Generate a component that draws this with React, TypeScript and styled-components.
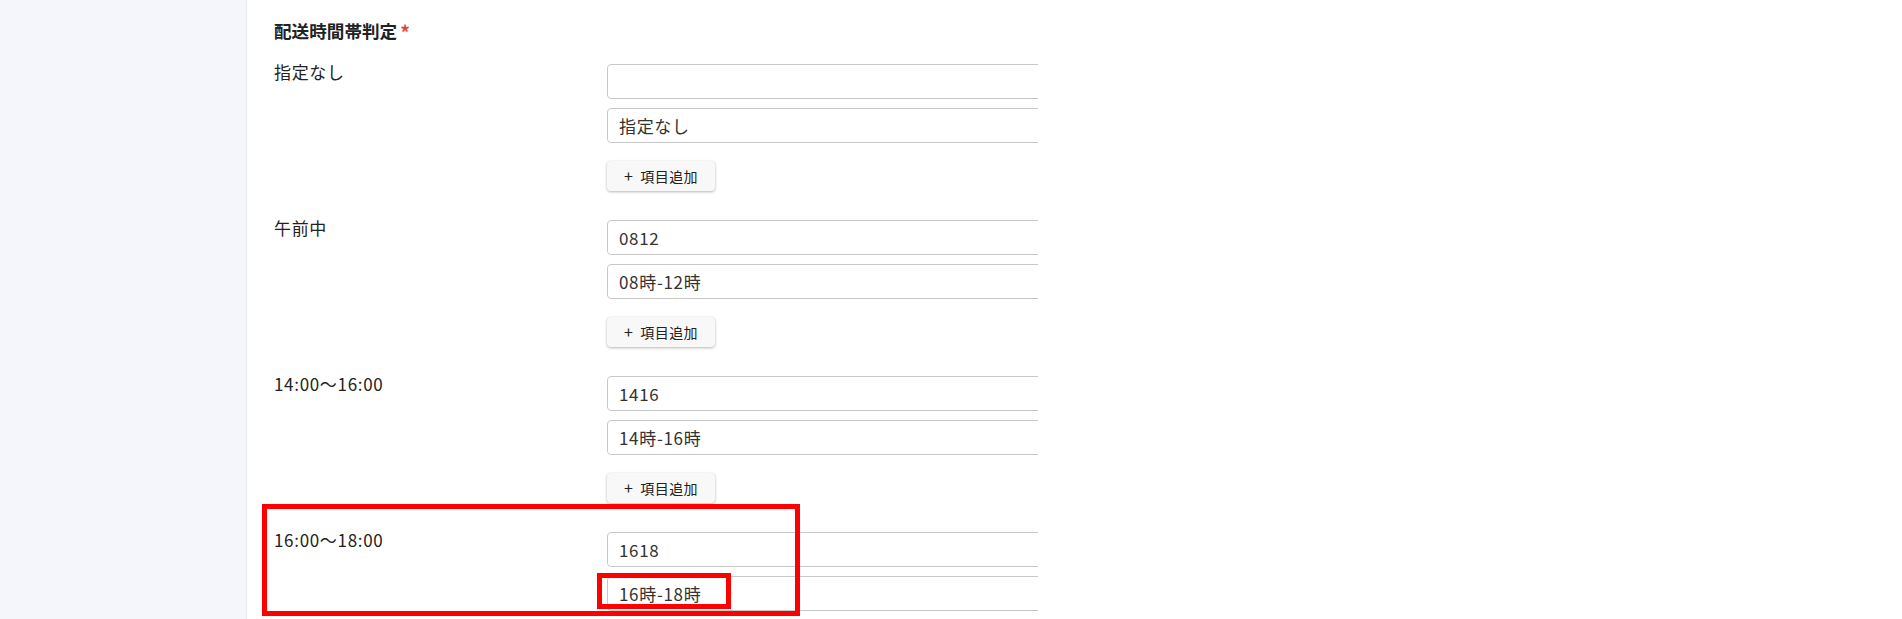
import React from "react";
import styled, { createGlobalStyle } from "styled-components";

const GlobalStyle = createGlobalStyle`
  html, body { margin: 0; padding: 0; background: #ffffff; }
  body {
    font-family: "Noto Sans CJK JP", "Noto Sans", sans-serif;
    color: #333333;
    overflow: hidden;
  }
  * { box-sizing: border-box; }
`;

const Layout = styled.div`
  display: flex;
  min-height: 100vh;
`;

const Sidebar = styled.aside`
  width: 247px;
  flex: 0 0 247px;
  background: #f5f6fb;
  border-right: 1px solid #e7e9ef;
`;

const Main = styled.main`
  flex: 1;
  padding: 18px 0 0 27px;
  background: #ffffff;
`;

const Title = styled.h2`
  margin: 0 0 20px;
  font-size: 17.6px;
  line-height: 1.5;
  font-weight: 700;
  color: #222222;
  display: flex;
  align-items: flex-start;
  gap: 3px;
`;

const Required = styled.span`
  color: #e8443a;
  font-size: 19px;
  font-weight: 700;
  line-height: 1;
  margin-top: 4px;
`;

const Groups = styled.div`
  display: flex;
  flex-direction: column;
  gap: 29px;
`;

const Group = styled.div`
  position: relative;
  display: grid;
  grid-template-columns: 333px 431px;
  align-items: start;
`;

const Label = styled.div`
  font-size: 17px;
  line-height: 1.2;
  letter-spacing: 0.04em;
  color: #222222;
  margin-top: -2px;
`;

const Fields = styled.div`
  position: relative;
  display: flex;
  flex-direction: column;
  align-items: flex-start;
  gap: 9px;
`;

const Clip = styled.div`
  width: 431px;
  overflow: hidden;
`;

const Input = styled.input`
  display: block;
  width: 520px;
  height: 35px;
  padding: 0 11px;
  border: 1px solid #c8c8c8;
  border-radius: 4px;
  font-family: inherit;
  font-size: 17px;
  letter-spacing: 0.04em;
  color: #333333;
  background: #ffffff;
  outline: none;
`;

const AddButton = styled.button`
  margin-top: 9px;
  width: 108px;
  height: 30px;
  border: none;
  border-radius: 4px;
  background: #f8f8f8;
  box-shadow: 0 1px 3px rgba(0, 0, 0, 0.28), 0 0 1px rgba(0, 0, 0, 0.08);
  font-family: inherit;
  font-size: 14px;
  letter-spacing: 0.03em;
  color: #222222;
  display: flex;
  align-items: center;
  justify-content: center;
  gap: 7px;
  cursor: pointer;
  padding: 0;
`;

const Plus = styled.span`
  font-size: 16px;
  font-weight: 400;
  line-height: 1;
  margin-top: -2px;
`;

const Highlight = styled.div<{ $l: number; $t: number; $w: number; $h: number }>`
  position: absolute;
  left: ${(p) => p.$l}px;
  top: ${(p) => p.$t}px;
  width: ${(p) => p.$w}px;
  height: ${(p) => p.$h}px;
  border: 5px solid #ff0000;
  pointer-events: none;
  z-index: 2;
`;

type Row = { label: string; code: string; name: string; mark?: boolean };

const rows: Row[] = [
  { label: "指定なし", code: "", name: "指定なし" },
  { label: "午前中", code: "0812", name: "08時-12時" },
  { label: "14:00〜16:00", code: "1416", name: "14時-16時" },
  { label: "16:00〜18:00", code: "1618", name: "16時-18時", mark: true },
];

export default function App() {
  return (
    <>
      <GlobalStyle />
      <Layout>
        <Sidebar />
        <Main>
          <Title>
            配送時間帯判定<Required>*</Required>
          </Title>
          <Groups>
            {rows.map((r) => (
              <Group key={r.label}>
                {r.mark && <Highlight $l={-12} $t={-28} $w={538} $h={112} />}
                <Label>{r.label}</Label>
                <Fields>
                  <Clip>
                    <Input defaultValue={r.code} />
                  </Clip>
                  <Clip>
                    <Input defaultValue={r.name} />
                  </Clip>
                  {r.mark && <Highlight $l={-10} $t={41} $w={134} $h={36} />}
                  <AddButton>
                    <Plus>+</Plus>
                    項目追加
                  </AddButton>
                </Fields>
              </Group>
            ))}
          </Groups>
        </Main>
      </Layout>
    </>
  );
}
